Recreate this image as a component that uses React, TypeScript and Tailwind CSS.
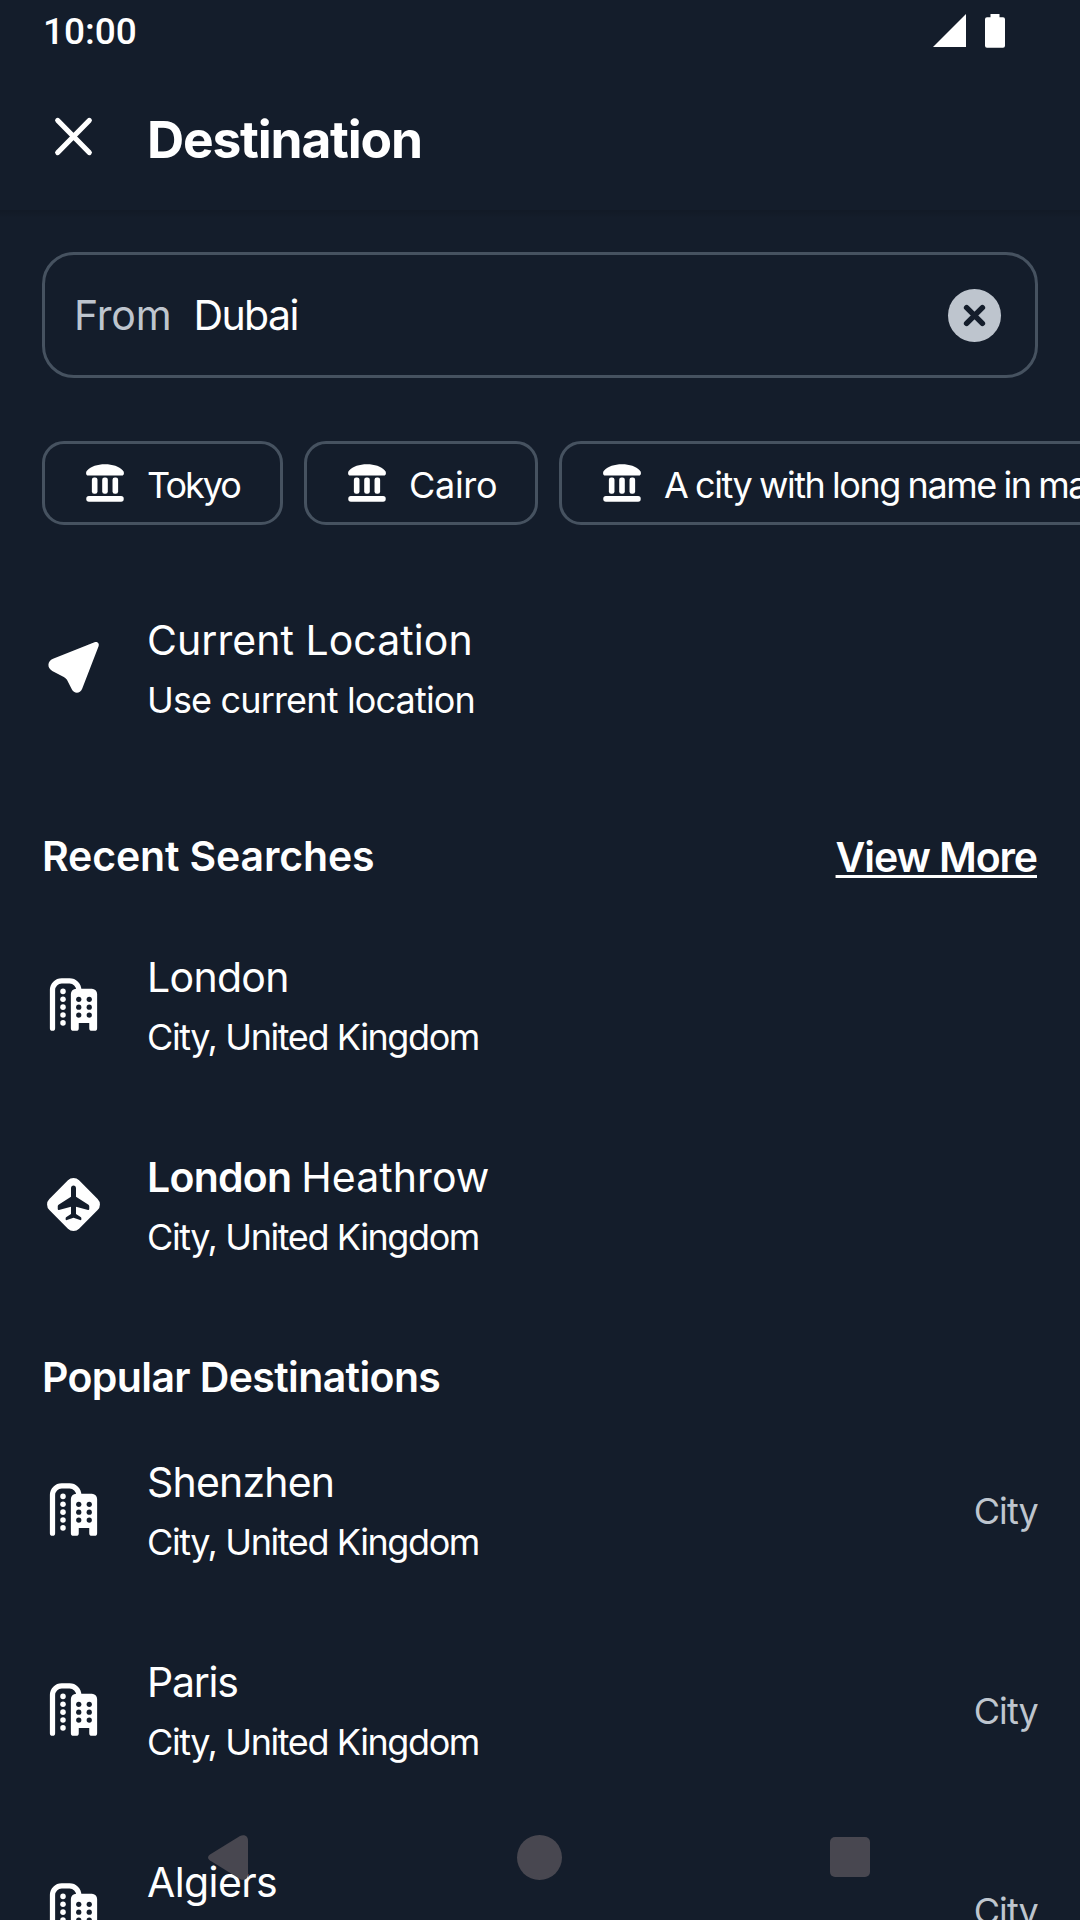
import type { ReactNode } from 'react';

function CloseIcon() {
  return (
    <svg viewBox="0 0 24 24" className="size-[63px] shrink-0" fill="none" stroke="#fff" strokeWidth="2" strokeLinecap="round">
      <path d="M6 5.900l12 12.200M18 5.900L6 18.100" />
    </svg>
  );
}

function ClearIcon() {
  return (
    <svg viewBox="0 0 24 24" className="size-[63px] shrink-0" fill="none">
      <circle cx="12" cy="12" r="10.1" fill="#bec5ce" />
      <path d="M9 9l6 6M15 9l-6 6" stroke="#141d2b" strokeWidth="2.1" strokeLinecap="round" />
    </svg>
  );
}

function LandmarkIcon() {
  return (
    <svg viewBox="0 0 24 24" className="size-[42px] shrink-0" fill="#fff">
      <path d="M12 1.3c4.4 0 8 1.3 10.2 3.5.4.4.6.8.6 1.3v.4c0 .7-.5 1.2-1.2 1.2H2.4c-.7 0-1.2-.5-1.2-1.2v-.4c0-.5.2-.9.6-1.3C4 2.600 7.600 1.300 12 1.300z" />
      <rect x="4.500" y="8.800" width="3.200" height="9.300" rx="1.300" />
      <rect x="10.400" y="8.800" width="3.200" height="9.300" rx="1.300" />
      <rect x="16.300" y="8.800" width="3.200" height="9.300" rx="1.300" />
      <rect x="1.300" y="19.400" width="21.400" height="3.300" rx="1.500" />
    </svg>
  );
}

function LocationIcon() {
  return (
    <svg viewBox="0 0 24 24" className="size-[63px] shrink-0" fill="#fff">
      <path d="M20 2.400c1.050-.4 1.950.45 1.550 1.500L15.300 20.100c-.75 1.950-3.100 2-3.950.2L9.600 16.900c-.3-.6-.7-1-1.300-1.300L3.900 13.300c-2.050-1.050-1.900-3.750.3-4.600z" />
    </svg>
  );
}

function CityIcon() {
  return (
    <svg viewBox="0 0 24 24" className="size-[63px] shrink-0">
      <path d="M4 21V6.500A3.500 3.500 0 0 1 7.500 3h3A3.500 3.500 0 0 1 14 6.500" fill="none" stroke="#fff" strokeWidth="2" strokeLinecap="round" />
      <g fill="#fff">
        {[7, 10, 13, 16, 19].map((y) => <circle key={y} cx="8" cy={y} r="1.050" />)}
        <path d="M13 6h6a2 2 0 0 1 2 2v13a1 1 0 0 1-1 1h-1a1 1 0 0 1-1-1v-2h-4v2a1 1 0 0 1-1 1h-1a1 1 0 0 1-1-1V8a2 2 0 0 1 2-2z" />
      </g>
      <g fill="#141d2b">
        {[10, 13, 16].map((y) => <circle key={y} cx="14" cy={y} r="1" />)}
        {[10, 13, 16].map((y) => <circle key={y} cx="18" cy={y} r="1" />)}
      </g>
    </svg>
  );
}

function AirportIcon() {
  return (
    <svg viewBox="0 0 24 24" className="size-[63px] shrink-0">
      <rect x="4" y="4" width="16" height="16" rx="3" fill="#fff" transform="rotate(45 12 12)" />
      <path
        d="M12 4.800c.55 0 .95.450.950 1V9l4.750 3.050c.2.150.3.350.3.600v1.100c0 .250-.2.400-.45.350L12.950 12.900v2.750l1.750 1.150c.2.150.3.300.3.500v.3c0 .3-.2.450-.5.350L12 17l-2.500.95c-.3.100-.5-.050-.5-.350v-.3c0-.2.100-.350.300-.5l1.750-1.150V12.900L6.450 14.100c-.250.050-.450-.1-.450-.350v-1.100c0-.250.100-.450.300-.6L11.050 9V5.800c0-.550.400-1 .950-1z"
        fill="#141d2b"
      />
    </svg>
  );
}

function Chip({ label, width, spacing }: { label: string; width: string; spacing: string }) {
  return (
    <button className={`flex h-[84px] shrink-0 items-center rounded-[22px] border-[3px] border-[#465260] pl-[39px] ${width}`}>
      <LandmarkIcon />
      <span className={`ml-[21px] mt-[3px] whitespace-nowrap text-[36px] leading-[44px] ${spacing}`}>{label}</span>
    </button>
  );
}

function Row({ icon, title, titleSpacing, subtitle, subSpacing, trailing }: {
  icon: ReactNode;
  title: ReactNode;
  titleSpacing: string;
  subtitle: string;
  subSpacing: string;
  trailing?: string;
}) {
  return (
    <li className="flex h-[200px] shrink-0 px-[42px]">
      <div className="pt-[68px]">{icon}</div>
      <div className="ml-[42px] flex-1 pt-[47px]">
        <div className={`text-[41px] leading-[50px] ${titleSpacing}`}>{title}</div>
        <div className={`mt-[13px] text-[36px] leading-[44px] ${subSpacing}`}>{subtitle}</div>
      </div>
      {trailing && <div className="pt-[79px] text-[36px] leading-[44px] tracking-[-0.85px] text-[#bec5ce]">{trailing}</div>}
    </li>
  );
}

const UK = 'City, United Kingdom';
const UK_SPACING = 'tracking-[-1.4px]';

export default function App() {
  return (
    <div className="relative flex h-[1920px] w-[1080px] flex-col overflow-hidden bg-[#141d2b] font-['Inter',sans-serif] text-white">
      <div className="flex h-[63px] shrink-0 items-start pl-[43px] pr-[75px]">
        <span className="mt-[9px] flex-1 font-[Roboto,sans-serif] text-[37px] font-medium leading-[45px]">10:00</span>
        <svg viewBox="0 0 33 33" className="mt-[14px] mr-[19px] h-[33px] w-[33px]" fill="#fff">
          <path d="M0 33L33 0v33z" />
        </svg>
        <svg viewBox="0 0 20 34" className="mt-[14px] h-[34px] w-5" fill="#fff">
          <path d="M5.500 0h9v3.200H18a2 2 0 0 1 2 2V31.700a2 2 0 0 1-2 2H2a2 2 0 0 1-2-2V5.200a2 2 0 0 1 2-2h3.500z" />
        </svg>
      </div>

      <header className="flex h-[147px] shrink-0 items-start px-[42px]">
        <div className="mt-[42px]"><CloseIcon /></div>
        <h1 className="mt-[44px] ml-[42px] text-[51.5px] font-bold leading-[64px] tracking-[-1.2px]">Destination</h1>
      </header>

      <div className="h-2 shrink-0 bg-linear-to-b from-black/12 to-transparent" />

      <div className="mx-[42px] mt-[34px] flex h-[126px] shrink-0 items-center rounded-[32px] border-[3px] border-[#465260] pr-[29px] pl-[29px] text-[41px] leading-[50px]">
        <span className="tracking-[-0.2px] text-[#bec5ce]">From</span>
        <span className="ml-[22px] flex-1 tracking-[-1.61px]">Dubai</span>
        <ClearIcon />
      </div>

      <div className="mt-[63px] flex shrink-0 gap-[21px] overflow-hidden pl-[42px]">
        <Chip label="Tokyo" width="w-[241px]" spacing="tracking-[-2px]" />
        <Chip label="Cairo" width="w-[234px]" spacing="tracking-[-0.3px]" />
        <Chip label="A city with long name in many words" width="w-[720px]" spacing="tracking-[-1.45px] [word-spacing:-1px]" />
      </div>

      <ul className="mt-[43px] shrink-0">
        <Row icon={<LocationIcon />} title="Current Location" titleSpacing="tracking-[0.05px]" subtitle="Use current location" subSpacing="tracking-[-0.84px]" />
      </ul>

      <div className="flex h-[137px] shrink-0 justify-between px-[42px] pt-[63px] text-[41px] font-semibold leading-[50px]">
        <h2 className="tracking-[-0.14px]">Recent Searches</h2>
        <a className="mt-px mr-px tracking-[-1.1px] underline decoration-[2.5px] underline-offset-[3px] [text-decoration-skip-ink:none]">View More</a>
      </div>

      <ul className="shrink-0">
        <Row icon={<CityIcon />} title="London" titleSpacing="tracking-[-0.68px]" subtitle={UK} subSpacing={UK_SPACING} />
        <Row
          icon={<AirportIcon />}
          title={<><span className="font-semibold tracking-[-0.76px]">London</span><span className="ml-[10px]">Heathrow</span></>}
          titleSpacing="tracking-[0.06px]"
          subtitle={UK}
          subSpacing={UK_SPACING}
        />
      </ul>

      <h2 className="h-[105px] shrink-0 px-[42px] pt-[47px] text-[41px] font-semibold leading-[50px] tracking-[-0.62px]">Popular Destinations</h2>

      <ul className="min-h-0 flex-1 overflow-hidden">
        <Row icon={<CityIcon />} title="Shenzhen" titleSpacing="tracking-[-0.8px]" subtitle={UK} subSpacing={UK_SPACING} trailing="City" />
        <Row icon={<CityIcon />} title="Paris" titleSpacing="tracking-[-1.25px]" subtitle={UK} subSpacing={UK_SPACING} trailing="City" />
        <Row icon={<CityIcon />} title="Algiers" titleSpacing="tracking-[-0.6px]" subtitle={UK} subSpacing={UK_SPACING} trailing="City" />
      </ul>

      <nav className="absolute inset-x-0 bottom-0 flex h-[126px] items-center justify-between pr-[210px] pl-[208px]">
        <svg viewBox="0 0 40 45" className="h-[45px] w-10" fill="#484750">
          <path d="M2 19.500L32 1.100c3.500-2.100 8-.6 8 4.400v34c0 5-4.500 6.500-8 4.400L2 25.500c-2.600-1.600-2.600-4.400 0-6z" />
        </svg>
        <div className="ml-px size-[45px] rounded-full bg-[#484750]" />
        <div className="size-[40px] rounded-[5px] bg-[#484750]" />
      </nav>
    </div>
  );
}
